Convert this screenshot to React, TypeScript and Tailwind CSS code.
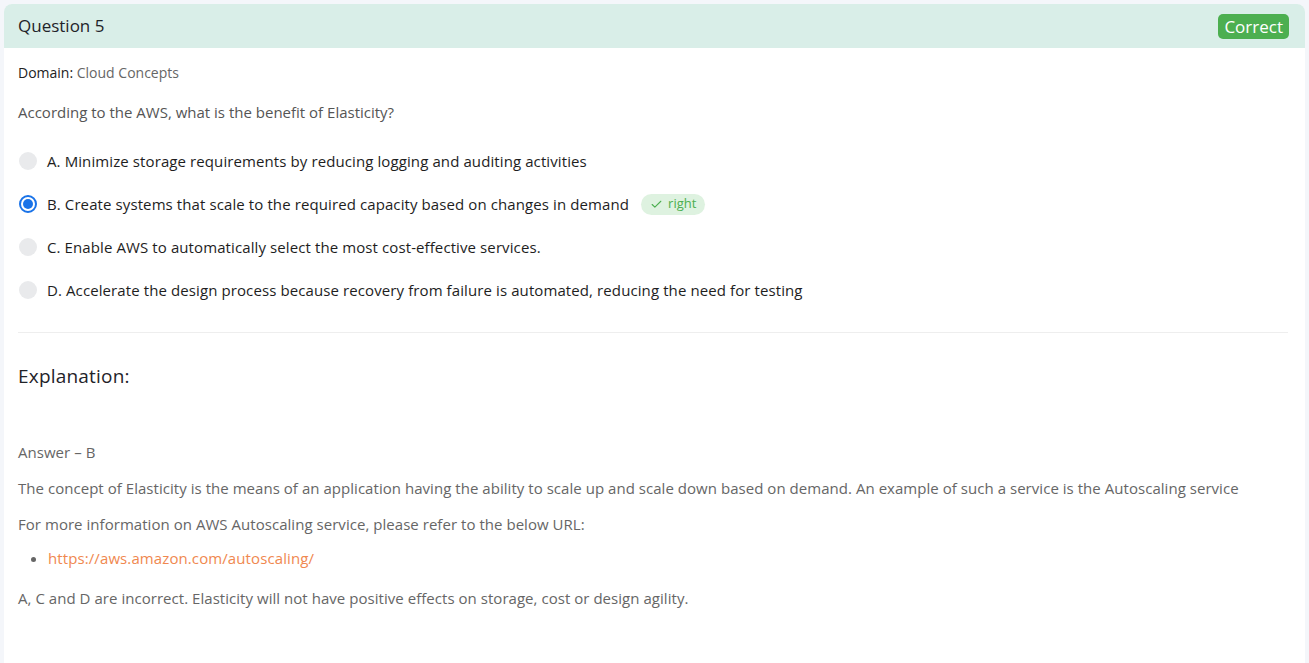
import { Check } from "lucide-react";

interface Option {
  label: string;
  text: string;
  selected?: boolean;
  right?: boolean;
}

const options: Option[] = [
  { label: "A", text: "Minimize storage requirements by reducing logging and auditing activities" },
  { label: "B", text: "Create systems that scale to the required capacity based on changes in demand", selected: true, right: true },
  { label: "C", text: "Enable AWS to automatically select the most cost-effective services." },
  { label: "D", text: "Accelerate the design process because recovery from failure is automated, reducing the need for testing" },
];

const Radio = ({ selected }: { selected?: boolean }) =>
  selected ? (
    <span className="w-[18px] h-[18px] rounded-full border-2 border-[#1a73e8] bg-white flex items-center justify-center shrink-0">
      <span className="w-[10px] h-[10px] rounded-full bg-[#1a73e8]" />
    </span>
  ) : (
    <span className="w-[18px] h-[18px] rounded-full bg-[#e9eaec] shrink-0" />
  );

const App = () => {
  return (
    <div className="min-h-screen bg-[#f4f6fa] pt-1 px-1 flex flex-col font-['Open_Sans',sans-serif]">
      <div className="flex-1 bg-white rounded-t-lg">
        {/* header */}
        <div className="h-[44px] bg-[#d9eee8] rounded-t-lg flex items-center justify-between pl-[14px] pr-[16px]">
          <h2 className="text-[17px] text-[#1f2329]">Question 5</h2>
          <span className="bg-[#4caf50] text-white text-[17px] leading-[25px] px-[6px] rounded-[5px]">Correct</span>
        </div>

        <div className="px-[14px]">
          <p className="mt-[15px] text-[14px] leading-[20px] text-[#666]">
            <span className="text-[#222]">Domain:</span> Cloud Concepts
          </p>
          <p className="mt-[19px] text-[15px] leading-[20px] text-[#555]">
            According to the AWS, what is the benefit of Elasticity?
          </p>

          <div className="mt-[27px] flex flex-col gap-[19px]">
            {options.map((o) => (
              <div key={o.label} className="h-[24px] flex items-center pl-[1px]">
                <Radio selected={o.selected} />
                <span className="ml-[10px] text-[15px] tracking-[0.1px] text-[#1e1e1e]">
                  {o.label}. {o.text}
                </span>
                {o.right && (
                  <span className="ml-[12px] h-[21px] px-[9px] rounded-full bg-[#def2e0] text-[#4caf50] text-[13px] flex items-center gap-[5px]">
                    <Check size={13} strokeWidth={2} />
                    right
                  </span>
                )}
              </div>
            ))}
          </div>

          <div className="mt-[30px] border-t border-[#eeeeee] mr-[3px]" />

          <h3 className="mt-[31px] text-[19px] tracking-[0.2px] leading-[24px] text-[#1f2329]">Explanation:</h3>

          <div className="text-[15px] tracking-[0.04px] leading-[20px] text-[#666]">
            <p className="mt-[54px]">Answer – B</p>
            <p className="mt-[16px]">
              The concept of Elasticity is the means of an application having the ability to scale up and scale down based on demand. An example of such a service is the Autoscaling service
            </p>
            <p className="mt-[16px]">For more information on AWS Autoscaling service, please refer to the below URL:</p>
            <ul className="mt-[14px] list-disc pl-[30px]">
              <li>
                <a href="#" className="text-[#f0884f] tracking-[0.1px]">https://aws.amazon.com/autoscaling/</a>
              </li>
            </ul>
            <p className="mt-[20px]">A, C and D are incorrect. Elasticity will not have positive effects on storage, cost or design agility.</p>
          </div>
        </div>
      </div>
    </div>
  );
};

export default App;
